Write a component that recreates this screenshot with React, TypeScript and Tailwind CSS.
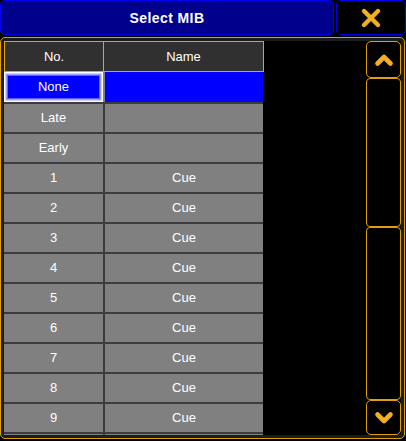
import React from "react";

const rows: { no: string; name: string }[] = [
  { no: "Late", name: "" },
  { no: "Early", name: "" },
  { no: "1", name: "Cue" },
  { no: "2", name: "Cue" },
  { no: "3", name: "Cue" },
  { no: "4", name: "Cue" },
  { no: "5", name: "Cue" },
  { no: "6", name: "Cue" },
  { no: "7", name: "Cue" },
  { no: "8", name: "Cue" },
  { no: "9", name: "Cue" },
  { no: "", name: "" },
];

export default function App() {
  return (
    <div
      className="w-[406px] h-[441px] bg-black flex flex-col overflow-hidden text-white"
      style={{ fontFamily: '"Liberation Sans", Arial, sans-serif' }}
    >
      {/* Title row */}
      <div className="h-[35px] flex gap-[2px] shrink-0">
        <div className="w-[334px] h-[35px] bg-[#00008c] border border-[#0000f0] rounded-[5px] flex items-center justify-center">
          <span className="text-[14px] font-bold tracking-[0.4px] leading-none">Select MIB</span>
        </div>
        <div className="w-[70px] h-[35px] bg-black border border-[#0000f0] rounded-[5px] flex items-center justify-center">
          <svg width="22" height="22" viewBox="0 0 22 22">
            <path d="M4 4 L18 18 M18 4 L4 18" stroke="#f2b020" strokeWidth="4.4" strokeLinecap="round" />
          </svg>
        </div>
      </div>

      {/* Panel */}
      <div className="mt-[2px] w-[405px] h-[402px] rounded-[5px] border border-[#e0a000] bg-[#1c1c1c] p-[3px] shrink-0">
        <div className="w-full h-full bg-black flex overflow-hidden">
          {/* Table */}
          <div className="w-[260px] flex flex-col">
            <div className="h-[31px] flex shrink-0 bg-[#e8a400] p-px gap-px text-[13px]">
              <div className="w-[98px] bg-[#303030] flex items-center justify-center">No.</div>
              <div className="w-[159px] bg-[#303030] flex items-center justify-center">Name</div>
            </div>
            <div className="w-[259px] bg-[#3c3c3c] flex flex-col gap-[2px] text-[13px]">
              <div className="h-[30px] flex gap-[2px] shrink-0 bg-[#808080]">
                <div className="w-[99px] bg-[#0000ff] flex items-center justify-center shadow-[inset_0_0_0_1px_#ffffff,inset_0_0_0_2px_#d0d0ff,inset_0_0_0_3px_#a0a0ff,inset_0_0_0_4px_#6060ff]">
                  None
                </div>
                <div className="w-[158px] bg-[#0000ff]" />
              </div>
              {rows.map((r, i) => (
                <div key={i} className="h-[28px] flex gap-[2px] shrink-0">
                  <div className="w-[99px] bg-[#808080] flex items-center justify-center">{r.no}</div>
                  <div className="w-[158px] bg-[#808080] flex items-center justify-center">{r.name}</div>
                </div>
              ))}
            </div>
          </div>

          <div className="flex-1" />

          {/* Scrollbar */}
          <div className="w-[35px] flex flex-col">
            <div className="h-[37px] border border-[#e0a000] rounded-[5px] flex items-center justify-center shrink-0">
              <svg width="20" height="14" viewBox="0 0 20 14">
                <path d="M3.5 10.5 L10 4 L16.5 10.5" stroke="#f2b020" strokeWidth="4.6" strokeLinecap="round" strokeLinejoin="round" fill="none" />
              </svg>
            </div>
            <div className="h-[149px] border border-[#e0a000] rounded-[4px] shrink-0" />
            <div className="flex-1 border border-[#e0a000] rounded-[4px]" />
            <div className="h-[35px] border border-[#e0a000] rounded-[5px] flex items-center justify-center shrink-0">
              <svg width="20" height="14" viewBox="0 0 20 14">
                <path d="M3.5 3.5 L10 10 L16.5 3.5" stroke="#f2b020" strokeWidth="4.6" strokeLinecap="round" strokeLinejoin="round" fill="none" />
              </svg>
            </div>
          </div>
        </div>
      </div>
    </div>
  );
}
